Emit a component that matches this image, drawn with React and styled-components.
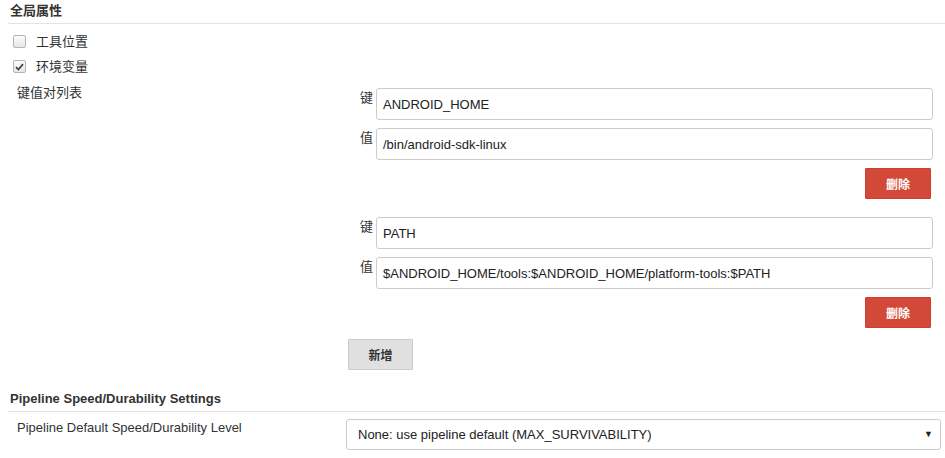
import styled, { createGlobalStyle } from "styled-components";

const GlobalStyle = createGlobalStyle`
  body {
    margin: 0;
    background: #fff;
    font-family: "Liberation Sans", Arial, "Noto Sans CJK SC", sans-serif;
    font-size: 13px;
    line-height: 15px;
    color: #333;
  }
`;

const Page = styled.div`
  width: 945px;
  padding-left: 8px;
  box-sizing: border-box;
`;

const SectionTitle = styled.div`
  font-weight: bold;
  font-size: 13px;
  line-height: 15px;
  color: #333;
  padding: 3px 2px 5px;
  margin-top: ${(p) => p.$top || "0px"};
  border-bottom: 1px solid #e3e3e3;
`;

const CheckList = styled.div`
  padding-top: 5px;
`;

const CheckRow = styled.label`
  display: flex;
  align-items: center;
  height: 25px;
  padding-left: 5px;
  gap: 10px;
  font-size: 13px;
`;

const Box = styled.span`
  width: 11px;
  height: 11px;
  border: 1px solid #b5b5b5;
  border-radius: 2px;
  background: linear-gradient(#fcfcfc, #e6e6e6);
  display: flex;
  align-items: center;
  justify-content: center;
`;

const FormRow = styled.div`
  display: flex;
  align-items: flex-start;
`;

const LabelCell = styled.div`
  width: 338px;
  padding: ${(p) => p.$top || "6px"} 0 0 9px;
  box-sizing: border-box;
  flex-shrink: 0;
`;

const Content = styled.div`
  width: ${(p) => p.$w || "587px"};
  flex-shrink: 0;
  display: flex;
  flex-direction: column;
  padding-top: ${(p) => p.$top || "0px"};
`;

const Entry = styled.div`
  display: flex;
  flex-direction: column;
  gap: 8px;
  margin-bottom: 18px;
`;

const Field = styled.div`
  display: flex;
  align-items: flex-start;
`;

const FieldLabel = styled.span`
  width: 30px;
  flex-shrink: 0;
  padding-left: 14px;
  box-sizing: border-box;
  padding-top: 2px;
  font-size: 13px;
  color: #333;
`;

const Input = styled.div`
  flex: 1;
  height: 32px;
  box-sizing: border-box;
  border: 1px solid #ccc;
  border-radius: 3px;
  padding: 0 6px;
  display: flex;
  align-items: center;
  font-size: 13px;
  color: #222;
`;

const ButtonRow = styled.div`
  display: flex;
  justify-content: flex-end;
  padding-right: 2px;
`;

const AddRow = styled.div`
  margin-top: -7px;
  padding-left: 2px;
`;

const Button = styled.button`
  width: ${(p) => p.$w || "66px"};
  height: 31px;
  border: 1px solid ${(p) => (p.$danger ? "#c9402f" : "#ccc")};
  background: ${(p) => (p.$danger ? "#d24939" : "#e0e0e0")};
  color: ${(p) => (p.$danger ? "#fff" : "#333")};
  font-family: inherit;
  font-size: 12px;
  font-weight: bold;
  border-radius: 1px;
  padding: 0;
`;

const Select = styled.div`
  height: 31px;
  box-sizing: border-box;
  border: 1px solid #ccc;
  border-radius: 3px;
  display: flex;
  align-items: center;
  justify-content: space-between;
  padding: 0 7px 0 11px;
  font-size: 13px;
  color: #222;
`;

const Arrow = styled.span`
  font-size: 9px;
  color: #222;
`;

function CheckBox({ checked }) {
  return (
    <Box>
      {checked && (
        <svg width="9" height="8" viewBox="0 0 9 8">
          <path d="M1 4.2 L3.4 6.5 L8 1.2" fill="none" stroke="#444" strokeWidth="1.8" />
        </svg>
      )}
    </Box>
  );
}

const entries = [
  { key: "ANDROID_HOME", value: "/bin/android-sdk-linux" },
  { key: "PATH", value: "$ANDROID_HOME/tools:$ANDROID_HOME/platform-tools:$PATH" },
];

export default function App() {
  return (
    <Page>
      <GlobalStyle />
      <SectionTitle>全局属性</SectionTitle>
      <CheckList>
        <CheckRow>
          <CheckBox />
          工具位置
        </CheckRow>
        <CheckRow>
          <CheckBox checked />
          环境变量
        </CheckRow>
      </CheckList>
      <FormRow>
        <LabelCell $top="6px">键值对列表</LabelCell>
        <Content $top="9px">
          {entries.map((e) => (
            <Entry key={e.key}>
              <Field>
                <FieldLabel>键</FieldLabel>
                <Input>{e.key}</Input>
              </Field>
              <Field>
                <FieldLabel>值</FieldLabel>
                <Input>{e.value}</Input>
              </Field>
              <ButtonRow>
                <Button $danger>删除</Button>
              </ButtonRow>
            </Entry>
          ))}
          <AddRow>
            <Button $w="65px">新增</Button>
          </AddRow>
        </Content>
      </FormRow>
      <SectionTitle $top="18px">Pipeline Speed/Durability Settings</SectionTitle>
      <FormRow>
        <LabelCell $top="8px">Pipeline Default Speed/Durability Level</LabelCell>
        <Content $w="595px" $top="7px">
          <Select>
            None: use pipeline default (MAX_SURVIVABILITY)
            <Arrow>▼</Arrow>
          </Select>
        </Content>
      </FormRow>
    </Page>
  );
}
